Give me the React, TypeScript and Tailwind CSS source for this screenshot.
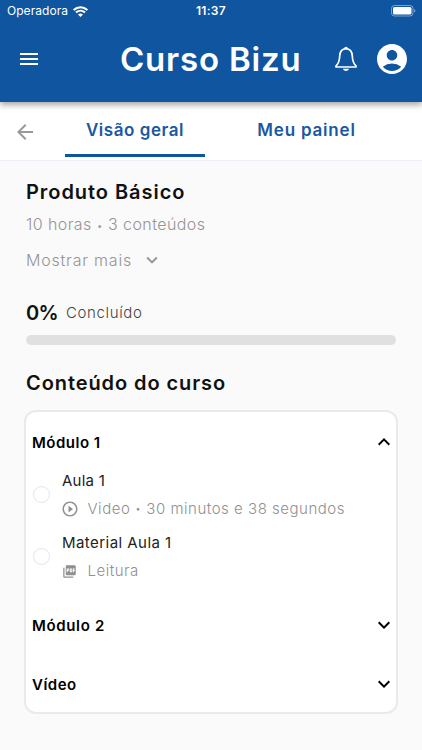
import { MdAccountCircle, MdArrowBack, MdKeyboardArrowDown, MdKeyboardArrowUp, MdMenu, MdPictureAsPdf, MdPlayCircleOutline } from "react-icons/md";

type Lesson = { title: string; titleCls: string; kind: "video" | "reading"; detail: string[] };
type Module = { title: string; open: boolean; titleCls: string; lessons: Lesson[] };

const modules: Module[] = [
  {
    title: "Módulo 1",
    open: true,
    titleCls: "tracking-[0.5px]",
    lessons: [
      { title: "Aula 1", titleCls: "tracking-[0.25px]", kind: "video", detail: ["Video", "30 minutos e 38 segundos"] },
      { title: "Material Aula 1", titleCls: "tracking-[0.45px]", kind: "reading", detail: ["Leitura"] },
    ],
  },
  { title: "Módulo 2", open: false, titleCls: "tracking-[0.65px]", lessons: [] },
  { title: "Vídeo", open: false, titleCls: "tracking-[0.5px]", lessons: [] },
];

function StatusBar() {
  return (
    <div className="grid h-[22px] grid-cols-3 items-center pl-[7px] pr-[6px] text-white">
      <div className="flex items-center gap-[5px]">
        <span className="w-[61px] text-[12px] leading-none tracking-[0.05px]">Operadora</span>
        <svg width="15" height="11" viewBox="0 0 15 11" fill="none" stroke="currentColor" strokeWidth="2.1">
          <path d="M0.7 4.1C4.5 0.3 10.5 0.3 14.3 4.1" />
          <path d="M3 6.6C5.6 4.2 9.4 4.2 12 6.6" />
          <path d="M7.5 10.9L5 8.4C6.4 7.2 8.6 7.2 10 8.4Z" fill="currentColor" stroke="none" />
        </svg>
      </div>
      <span className="pr-px text-center text-[12px] font-semibold leading-none tracking-[0.3px]">11:37</span>
      <svg className="justify-self-end" width="25" height="12" viewBox="0 0 25 12">
        <rect x="0.5" y="0.5" width="21.5" height="10.5" rx="3" fill="none" stroke="#fff" strokeOpacity="0.45" />
        <rect x="2" y="2" width="18.5" height="7.5" rx="1.6" fill="#fff" />
        <path d="M23.2 4v3.6c1.6-.6 1.6-3 0-3.6z" fill="#fff" fillOpacity="0.5" />
      </svg>
    </div>
  );
}

function Header() {
  return (
    <header className="relative z-10 h-[102px] bg-[#0f55a0] text-white shadow-[0_3px_6px_rgba(0,0,0,0.35)]">
      <StatusBar />
      <div className="flex h-[74px] items-center pl-[17px] pr-[12px]">
        <button><MdMenu size={24} /></button>
        <h1 className="ml-[79px] w-[184px] whitespace-nowrap text-[33px] font-semibold leading-none tracking-[0.8px]">Curso Bizu</h1>
        <button className="ml-[30px]">
          <svg width="24" height="26" viewBox="0 0 24 26" fill="none" stroke="currentColor" strokeWidth="1.7" strokeLinejoin="round">
            <path d="M12 2.6C8.2 2.9 5.9 5.6 5.7 10C5.5 15.6 4.6 17.6 2 19.8V21H22V19.8C19.4 17.6 18.5 15.6 18.3 10C18.1 5.6 15.8 2.9 12 2.6Z" />
            <path d="M10 2.8C10.3 0 13.7 0 14 2.8Z" fill="currentColor" stroke="none" />
            <path d="M9 22.8H15C14.6 25.6 9.4 25.6 9 22.8Z" fill="currentColor" stroke="none" />
          </svg>
        </button>
        <button className="ml-auto"><MdAccountCircle size={36} /></button>
      </div>
    </header>
  );
}

function Tabs() {
  return (
    <nav className="flex h-[59px] border-b border-[#eeeef6] bg-white pl-[13px] text-[17px] font-semibold text-[#1b58a3]">
      <button className="mt-[18px] h-6 text-[#999]"><MdArrowBack size={24} /></button>
      <button className="ml-[28px] h-[55px] w-[140px] border-b-3 border-[#0f55a0] pt-[5px] tracking-[0.55px]">Visão geral</button>
      <button className="ml-[32px] h-[55px] w-[139px] pt-[2px] tracking-[0.8px]">Meu painel</button>
    </nav>
  );
}

function Dot() {
  return <span className="mx-[5px] text-[0.65em]">•</span>;
}

function LessonRow({ lesson }: { lesson: Lesson }) {
  const Icon = lesson.kind === "video" ? MdPlayCircleOutline : MdPictureAsPdf;
  return (
    <li className="flex h-[62px] items-center gap-[12px] pl-px">
      <span className="mb-px h-[17px] w-[17px] rounded-full border-[1.5px] border-[#e4e4ec]" />
      <div>
        <p className={`h-[28px] text-[15px] leading-[28px] text-[#222] ${lesson.titleCls}`}>{lesson.title}</p>
        <p className="flex h-[29px] items-center text-[15px] font-light tracking-[0.52px] text-[#909090]">
          <span className={lesson.kind === "video" ? "-ml-px flex w-[26.5px]" : "flex w-[25.5px]"}>
            <Icon size={lesson.kind === "video" ? 18 : 15} />
          </span>
          {lesson.detail[0]}
          {lesson.detail[1] && <><Dot />{lesson.detail[1]}</>}
        </p>
      </div>
    </li>
  );
}

function ModuleSection({ module }: { module: Module }) {
  const Arrow = module.open ? MdKeyboardArrowUp : MdKeyboardArrowDown;
  return (
    <section>
      <button className="flex h-[59px] w-full items-center justify-between text-black">
        <span className={`pt-[3px] text-[15px] font-semibold ${module.titleCls}`}>{module.title}</span>
        <Arrow size={24} />
      </button>
      {module.open && (
        <ul className="-mt-[7px] h-[131px]">
          {module.lessons.map((lesson) => <LessonRow key={lesson.title} lesson={lesson} />)}
        </ul>
      )}
    </section>
  );
}

export default function App() {
  return (
    <div className="h-[750px] overflow-hidden bg-[#fafafa] font-['Inter',sans-serif]">
      <Header />
      <Tabs />
      <main className="px-[25px] pt-[17px]">
        <h2 className="pl-px text-[20px] font-semibold leading-[28px] tracking-[0.95px] text-[#111]">Produto Básico</h2>
        <p className="mt-[6px] h-[24px] pl-px text-[16px] font-light leading-[24px] tracking-[0.42px] text-[#959595]">10 horas<Dot />3 conteúdos</p>
        <button className="mt-[12px] flex h-[24px] items-center gap-[9px] pl-px text-[16px] font-light tracking-[0.8px] text-[#959595]">
          Mostrar mais <MdKeyboardArrowDown size={22} />
        </button>

        {/* Progresso */}
        <div className="mt-[28px] flex h-[26px] items-center gap-[8px] pl-px">
          <span className="text-[20px] font-semibold tracking-[-0.7px] text-[#111]">0%</span>
          <span className="pt-px text-[15px] font-light tracking-[0.65px] text-[#444]">Concluído</span>
        </div>
        <div className="mx-px mt-[9px] h-[10px] rounded-full bg-[#e0e0e0]" />

        {/* Conteúdo */}
        <h2 className="mt-[24px] pl-px text-[20px] font-semibold leading-[28px] tracking-[0.92px] text-[#111]">Conteúdo do curso</h2>
        <div className="-mx-px mt-[13px] h-[304px] rounded-[12px] border-2 border-[#e9e9f0] bg-white pl-[6px]">
          {modules.map((module) => <ModuleSection key={module.title} module={module} />)}
        </div>
      </main>
    </div>
  );
}
